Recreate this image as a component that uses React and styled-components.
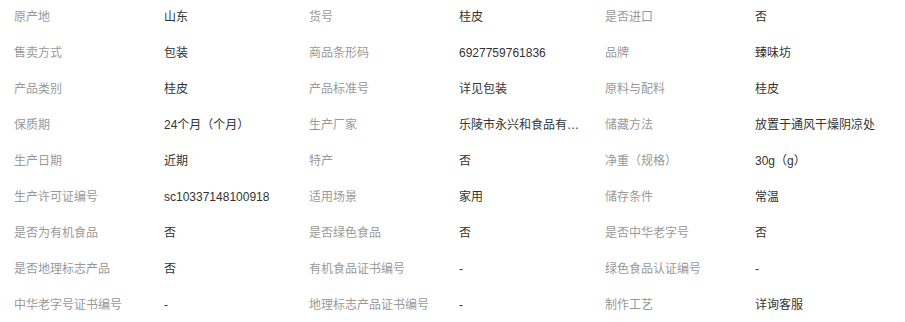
import React from 'react';
import styled, { createGlobalStyle } from 'styled-components';

const GlobalStyle = createGlobalStyle`
  html, body {
    margin: 0;
    padding: 0;
    background: #fff;
  }
  body {
    font-family: "Liberation Sans", "Noto Sans CJK SC", sans-serif;
    font-size: 12px;
  }
`;

const attributes = [
  ['原产地', '山东'],
  ['货号', '桂皮'],
  ['是否进口', '否'],
  ['售卖方式', '包装'],
  ['商品条形码', '6927759761836'],
  ['品牌', '臻味坊'],
  ['产品类别', '桂皮'],
  ['产品标准号', '详见包装'],
  ['原料与配料', '桂皮'],
  ['保质期', '24个月（个月）'],
  ['生产厂家', '乐陵市永兴和食品有限公司'],
  ['储藏方法', '放置于通风干燥阴凉处'],
  ['生产日期', '近期'],
  ['特产', '否'],
  ['净重（规格）', '30g（g）'],
  ['生产许可证编号', 'sc10337148100918'],
  ['适用场景', '家用'],
  ['储存条件', '常温'],
  ['是否为有机食品', '否'],
  ['是否绿色食品', '否'],
  ['是否中华老字号', '否'],
  ['是否地理标志产品', '否'],
  ['有机食品证书编号', '-'],
  ['绿色食品认证编号', '-'],
  ['中华老字号证书编号', '-'],
  ['地理标志产品证书编号', '-'],
  ['制作工艺', '详询客服'],
];

const AttrList = styled.ul`
  list-style: none;
  margin: 0;
  padding: 0 0 0 14px;
  display: grid;
  grid-template-columns: 295px 296px 1fr;
  grid-auto-rows: 36px;
`;

const AttrItem = styled.li`
  display: flex;
  align-items: center;
  line-height: 16px;
  padding-bottom: 2px;
`;

const Label = styled.span`
  flex: 0 0 150px;
  color: #999;
  white-space: nowrap;
`;

const Value = styled.span`
  max-width: 124px;
  color: #333;
  white-space: nowrap;
  overflow: hidden;
  text-overflow: ellipsis;
`;

export default function App() {
  return (
    <>
      <GlobalStyle />
      <AttrList>
        {attributes.map(([label, value]) => (
          <AttrItem key={label}>
            <Label>{label}</Label>
            <Value>{value}</Value>
          </AttrItem>
        ))}
      </AttrList>
    </>
  );
}
